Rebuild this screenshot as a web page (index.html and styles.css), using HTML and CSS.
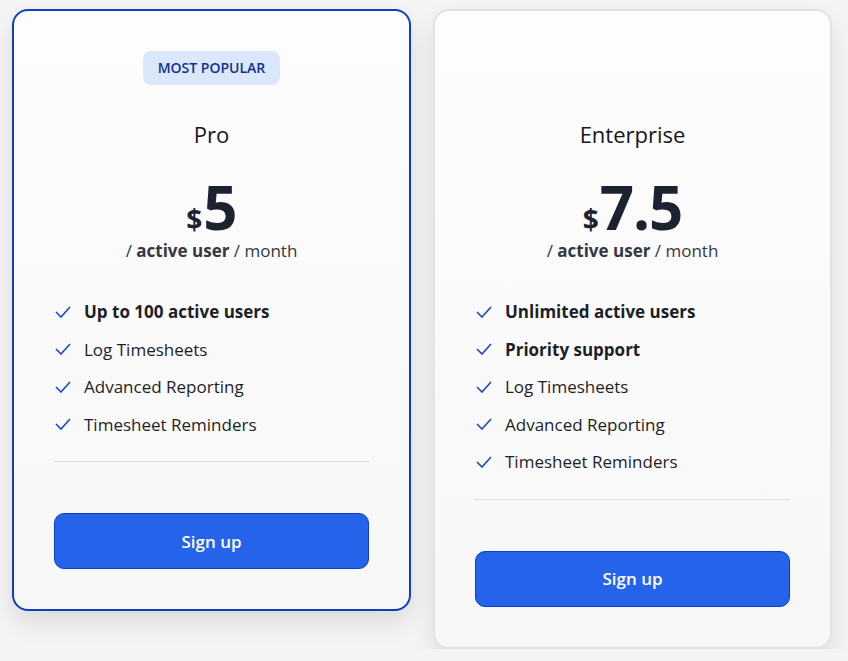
FILE: index.html
```html
<!DOCTYPE html>
<html lang="en">
<head>
    <meta charset="UTF-8">
    <meta name="viewport" content="width=device-width, initial-scale=1.0">
    <title>Pricing</title>
    <link rel="stylesheet" href="styles.css">
</head>
<body>
    <div class="plans">
        <div class="plan featured">
            <div class="plan-head">
                <span class="badge">MOST POPULAR</span>
                <h2 class="plan-name">Pro</h2>
                <div class="price"><span class="currency">$</span>5</div>
                <div class="per">/ <b>active user</b> / month</div>
            </div>
            <ul class="features">
                <li class="strong"><svg class="check" viewBox="0 0 16 12"><path d="M1 6l5 5L15 1"/></svg>Up to 100 active users</li>
                <li><svg class="check" viewBox="0 0 16 12"><path d="M1 6l5 5L15 1"/></svg>Log Timesheets</li>
                <li><svg class="check" viewBox="0 0 16 12"><path d="M1 6l5 5L15 1"/></svg>Advanced Reporting</li>
                <li><svg class="check" viewBox="0 0 16 12"><path d="M1 6l5 5L15 1"/></svg>Timesheet Reminders</li>
            </ul>
            <button class="signup">Sign up</button>
        </div>

        <div class="plan">
            <div class="plan-head">
                <span class="badge hidden">MOST POPULAR</span>
                <h2 class="plan-name">Enterprise</h2>
                <div class="price"><span class="currency">$</span>7.5</div>
                <div class="per">/ <b>active user</b> / month</div>
            </div>
            <ul class="features">
                <li class="strong"><svg class="check" viewBox="0 0 16 12"><path d="M1 6l5 5L15 1"/></svg>Unlimited active users</li>
                <li class="strong"><svg class="check" viewBox="0 0 16 12"><path d="M1 6l5 5L15 1"/></svg>Priority support</li>
                <li><svg class="check" viewBox="0 0 16 12"><path d="M1 6l5 5L15 1"/></svg>Log Timesheets</li>
                <li><svg class="check" viewBox="0 0 16 12"><path d="M1 6l5 5L15 1"/></svg>Advanced Reporting</li>
                <li><svg class="check" viewBox="0 0 16 12"><path d="M1 6l5 5L15 1"/></svg>Timesheet Reminders</li>
            </ul>
            <button class="signup">Sign up</button>
        </div>
    </div>
</body>
</html>
```

FILE: styles.css
```css
* {
    margin: 0;
    padding: 0;
    box-sizing: border-box;
}

body {
    font-family: 'Open Sans', sans-serif;
    background: #f4f4f4;
    color: #1a1d24;
}

.plans {
    display: flex;
    align-items: flex-start;
    gap: 22px;
    padding: 9px 0 0 12px;
}

.plan {
    width: 399px;
    padding: 40px;
    border: 2px solid #e2e2e2;
    border-radius: 16px;
    background: linear-gradient(#fdfdfd, #f7f7f7);
    box-shadow: 0 12px 24px rgba(0, 0, 0, 0.10);
}

.plan.featured {
    border-color: #0b3fbf;
}

.plan-head {
    text-align: center;
}

.badge {
    display: inline-block;
    height: 34px;
    line-height: 34px;
    padding: 0 15px;
    border-radius: 8px;
    background: #dbe8fc;
    color: #10308f;
    font-size: 14px;
    font-weight: 600;
}

.badge.hidden {
    visibility: hidden;
}

.plan-name {
    margin-top: 35px;
    font-size: 22px;
    font-weight: 400;
    line-height: 29px;
    color: #15171c;
}

.price {
    margin-top: 36px;
    font-size: 60px;
    font-weight: 700;
    line-height: 44px;
    color: #1d2230;
    letter-spacing: -1px;
}

.currency {
    font-size: 28px;
    margin-right: 2px;
}

.per {
    font-size: 17px;
    line-height: 20px;
    color: #333842;
}

.per b {
    font-weight: 700;
}

.features {
    list-style: none;
    margin-top: 32px;
    padding-bottom: 18px;
    border-bottom: 1px solid #dcdcdc;
}

.features li {
    display: flex;
    align-items: center;
    height: 37.5px;
    font-size: 17px;
    color: #1c1f26;
}

.features li.strong {
    font-weight: 700;
}

.check {
    width: 16px;
    height: 12px;
    margin: 0 13px 0 1px;
    fill: none;
    stroke: #1a47c8;
    stroke-width: 1.6;
}

.signup {
    display: block;
    width: 100%;
    height: 56px;
    margin-top: 51px;
    border: 1px solid #0b40c4;
    border-radius: 10px;
    background: #2563eb;
    color: #fff;
    font-family: inherit;
    font-size: 17px;
    font-weight: 600;
}
```
